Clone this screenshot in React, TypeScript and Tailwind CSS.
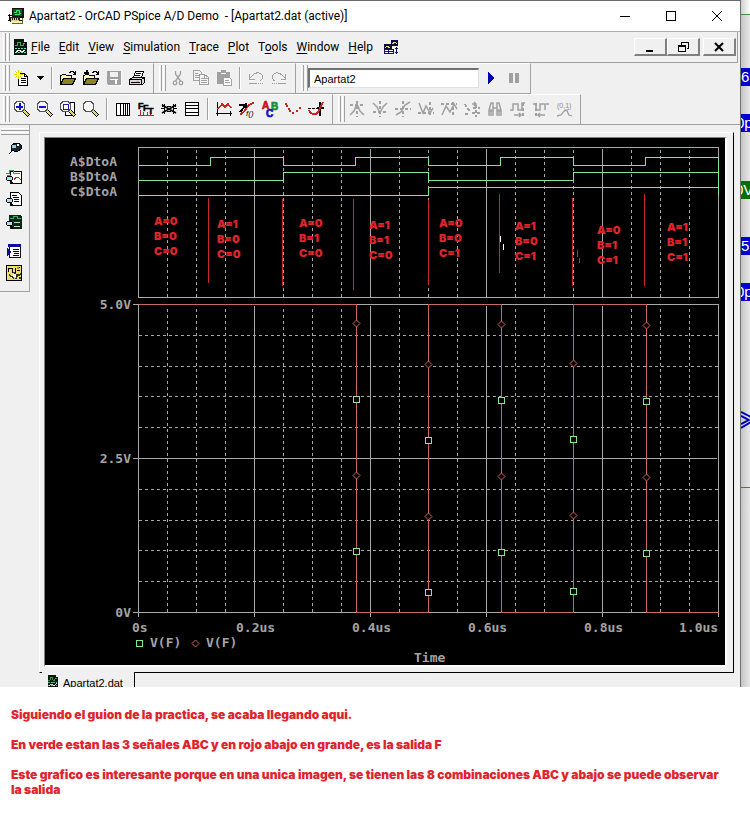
import React from "react";

type IconProps = { children: React.ReactNode; size?: string };

const UI = "font-['Roboto','Open_Sans',sans-serif]";
const ARIAL = "font-['Liberation_Sans',Arial,sans-serif]";
const HEAVY = "font-['Inter','Liberation_Sans',sans-serif] font-black";

function Icon({ children, size = "size-4" }: IconProps) {
  return (
    <svg viewBox="0 0 16 16" className={`${size} shrink-0 overflow-visible`} fill="none" stroke="#000" strokeWidth="1" shapeRendering="crispEdges" aria-hidden="true">
      {children}
    </svg>
  );
}

function Tool({ label, children }: { label: string; children: React.ReactNode }) {
  return (
    <button type="button" aria-label={label} title={label} className="flex h-[22px] w-[23px] shrink-0 items-center justify-center">
      {children}
    </button>
  );
}

function Grip() {
  return (
    <span className="flex h-full shrink-0 gap-px pl-[3px]" aria-hidden="true">
      <span className="w-[3px] border-r border-l border-l-white border-r-[#a0a0a0]" />
      <span className="w-[3px] border-r border-l border-l-white border-r-[#a0a0a0]" />
    </span>
  );
}

function Sep() {
  return (
    <span className="flex h-[22px] w-[9px] shrink-0 justify-center" aria-hidden="true">
      <span className="w-[2px] border-l border-[#a0a0a0] bg-white" />
    </span>
  );
}

function Band({ children }: { children: React.ReactNode }) {
  return (
    <div className="flex h-[31px] items-center border-t border-r border-b border-t-white border-r-[#a0a0a0] border-b-[#a0a0a0] pt-px pr-[5px] pb-[2px] pl-[2px] first:pl-0">
      <Grip />
      {children}
    </div>
  );
}

/* ---------- icons ---------- */

const DatIcon = ({ size }: { size?: string }) => (
  <Icon size={size}>
    <path d="M2 0h10l3 3v13h-13z" fill="#0a1410" stroke="none" />
    <path d="M12 0l3 3h-3z" fill="#fff" stroke="none" />
    <path d="M3 6.500h2v-3h3v3h3v-2h2" stroke="#2fae4a" />
    <path d="M3 9.500h11M3 13.500h11" stroke="#7fd8b0" strokeDasharray="2 1" />
    <path d="M4 13l3-2 3 2 3-2" stroke="#fff" />
  </Icon>
);

const AppIcon = () => (
  <Icon>
    <path d="M4 0h12v10h-12z" fill="#111" stroke="none" />
    <path d="M5 1h9v7h-9z" fill="#0c5a22" stroke="none" />
    <path d="M6 4.500h2v-2h3v3h2M7 6.500h5" stroke="#3ddc64" />
    <path d="M0 7.500h4M1.500 6v7M0 12.500h14" />
    <path d="M2 9h9v4h-9z" fill="#d8cf7a" stroke="#222" />
    <path d="M4 12v-4M6 12v-4M8 12v-4M10 12v-4" stroke="#222" />
    <path d="M3 13h10v3h-10z" fill="#f2eeb0" stroke="none" />
    <path d="M14.500 10v5h-11" stroke="#6b6420" />
  </Icon>
);

const NewIcon = () => (
  <Icon>
    <path d="M4.500 3.500h6l3 3v9h-9z" fill="#fff" />
    <path d="M10.500 3.500v3h3M7 8.500h5M7 10.500h5M7 12.500h5" />
    <path d="M4.500 0v9M0 4.500h9M1 1l7 7M8 1l-7 7" stroke="#e0d800" />
    <path d="M3 3h3v3h-3z" fill="#fff86a" stroke="none" />
  </Icon>
);

const OpenIcon = ({ plus }: { plus?: boolean }) => (
  <Icon>
    <path d="M.5 14.500v-9h1l1-1h3l1 1h5v3" fill="#fffbb0" />
    <path d="M.5 14.500l3-6h12l-3 6z" fill="#8a8420" />
    <path d="M9 2.500h1v-1h3v1h1v2M15.500 1v3h-3" />
    {plus && <path d="M3.500 0v5M1 2.500h5" strokeWidth="2" />}
  </Icon>
);

const SaveIcon = () => (
  <Icon>
    <path d="M1 1h14v14h-13l-1-1z" fill="#a0a0a0" stroke="none" />
    <path d="M4 2h8v5h-8z" fill="#f0f0f0" stroke="none" />
    <path d="M9 10h2v4h-2z" fill="#fff" stroke="none" />
    <path d="M4 9.500h8M15.500 2v13.500h-13" stroke="#fff" />
  </Icon>
);

const PrintIcon = () => (
  <Icon>
    <path d="M4.500 7.500l2-6h8l-2 6z" fill="#fff" />
    <path d="M7 3.500h5M6 5.500h5" />
    <path d="M.5 9.500l3-2h12v5l-2 2h-13z" fill="#d8d8d8" />
    <path d="M.5 9.500h12v5M12.500 9.500l3-2M2 12.500h9" />
    <path d="M7 11h3v1h-3z" fill="#d8c800" stroke="none" />
  </Icon>
);

const CutIcon = () => (
  <Icon>
    <g stroke="#a0a0a0" shapeRendering="auto">
      <path d="M5.500 1v3l5 7M10.500 1v3l-5 7" strokeWidth="1.300" />
      <circle cx="5" cy="13" r="1.800" strokeWidth="1.300" />
      <circle cx="11" cy="13" r="1.800" strokeWidth="1.300" />
    </g>
  </Icon>
);

const CopyIcon = () => (
  <Icon>
    <g stroke="#a0a0a0">
      <path d="M.5.5h6l2 2v8h-8z" fill="#f4f4f4" />
      <path d="M2 3.500h3M2 5.500h5M2 7.500h5" />
      <path d="M6.500 4.500h5l4 3v7h-9z" fill="#f4f4f4" />
      <path d="M8 8.500h4M8 10.500h6M8 12.500h6M11.500 5v3h4" />
    </g>
  </Icon>
);

const PasteIcon = () => (
  <Icon>
    <path d="M1 2h13v12h-13z" fill="#a0a0a0" stroke="none" />
    <path d="M5 0h5v4h-5z" fill="#a0a0a0" stroke="none" />
    <path d="M5 3.500h5" stroke="#fff" />
    <path d="M7.500 7.500h6l2 2v6h-8z" fill="#fff" stroke="#a0a0a0" />
    <path d="M9 10.500h4M9 12.500h5" stroke="#a0a0a0" />
  </Icon>
);

const UndoIcon = ({ flip }: { flip?: boolean }) => (
  <Icon>
    <g transform={flip ? "translate(16 0) scale(-1 1)" : undefined} stroke="#a0a0a0">
      <path d="M1.500 4v5h5M2 8l3-3c3-3 7-3 9 0 1 3 0 5-2 6" />
      <path d="M2 10.500h4" stroke="#fff" />
      <path d="M1 13.500h8" />
      <path d="M10 13.500h5" strokeDasharray="1 1" />
    </g>
  </Icon>
);

const Magnifier = ({ mode }: { mode: "in" | "out" | "area" | "fit" }) => (
  <Icon>
    {mode === "area" && <path d="M5.500 1.500h9v13h-9z" fill="#fff" />}
    <path d="M9 9l6 6" strokeWidth="4" />
    <path d="M9.500 9.500l5 5" stroke="#e0d868" strokeWidth="2" />
    <path d="M3 .5h5l2.500 2.500v5l-2.500 2.500h-5l-2.500-2.500v-5z" fill="#f6f6f6" stroke="#555" />
    {mode === "in" && <path d="M5.500 2v7M2 5.500h7" stroke="#1010c8" strokeWidth="2" />}
    {mode === "out" && <path d="M2 5.500h7" stroke="#1010c8" strokeWidth="2" />}
    {mode === "area" && <path d="M3 3h5v5h-5z" stroke="#2020a0" fill="#fff" />}
  </Icon>
);

const LogXIcon = () => (
  <Icon>
    <path d="M1.500 2.500h13v12h-13z" fill="#fff" />
    <path d="M5.500 2v13M8.500 2v13M10.500 2v13M12.500 2v13" />
  </Icon>
);

const FftIcon = () => (
  <Icon>
    <path d="M0 14.500h16M2.500 14v-5M5.500 14v-3M9.500 14v-3M12.500 14v-2" stroke="#d02020" />
    <g className={ARIAL} fill="#000" stroke="#000" strokeWidth="0.500" fontWeight="700" fontSize="9">
      <text x="0" y="8">F</text>
      <text x="5" y="10">F</text>
      <text x="10" y="13">T</text>
    </g>
  </Icon>
);

const PerfIcon = () => (
  <Icon>
    <path d="M1 4l14 8M1 12l14-8" strokeWidth="1.500" shapeRendering="auto" />
    <path d="M0 7.500h4M12 7.500h4M1.500 3v3M3.500 3v10M12.500 3v10M14.500 3v3M6 5.500h4M6 10.500h4" />
  </Icon>
);

const LogYIcon = () => (
  <Icon>
    <path d="M1.500 1.500h13v13h-13z" fill="#fff" />
    <path d="M1 4.500h14M1 7.500h14M1 11.500h14" />
  </Icon>
);

const AddTraceIcon = () => (
  <Icon>
    <path d="M1.500 1v14M0 12.500h16M14.500 10v5" />
    <path d="M2 8l4-5 3 3 3-3 3 4" stroke="#d02020" strokeWidth="1.500" />
  </Icon>
);

const EvalIcon = () => (
  <Icon>
    <path d="M1 13c6 0 5-10 14-11" stroke="#d02020" strokeWidth="2" />
    <path d="M0 3.500h6M1 11l6-7M6.500 2v5" strokeWidth="2" />
    <text x="7" y="15" fontSize="8" fill="#000" stroke="none" fontStyle="italic" className={ARIAL}>f()</text>
  </Icon>
);

const LabelIcon = () => (
  <Icon>
    <g className={ARIAL} strokeWidth="0.700" fontWeight="700" fontSize="10">
      <text x="0" y="8" fill="#c81020" stroke="#c81020">A</text>
      <text x="9" y="9" fill="#109030" stroke="#109030">B</text>
      <text x="4" y="16" fill="#1010c8" stroke="#1010c8">C</text>
    </g>
  </Icon>
);

const PointsIcon = () => (
  <Icon>
    <path d="M0 2h2v2h-2zM1 4h2v2h-2zM3 7h2v2h-2zM4 9h2v2h-2zM7 11h2v2h-2zM11 9h2v2h-2zM14 6h2v2h-2z" fill="#d02020" stroke="none" />
  </Icon>
);

const CursorIcon = () => (
  <Icon>
    <path d="M0 7.500h10" strokeDasharray="3 1" />
    <path d="M12 1v14M9 7h7" strokeWidth="2" />
    <path d="M1 9c2 5 8 6 10 0l4-8" stroke="#d02020" strokeWidth="2" />
  </Icon>
);

/* greyed cursor commands */
const cursorTools: { label: string; d: string; dash?: string }[] = [
  { label: "Cursor peak", d: "M1 14l4-4 3-7 3 7 4 4", dash: "M1 4h14M8 0v16" },
  { label: "Cursor trough", d: "M1 2l4 4 3 6 3-6 4-4", dash: "M1 11h14M8 0v16" },
  { label: "Cursor slope", d: "M1 14l5-3 4-7 5-3", dash: "M0 8h16M8 0v16" },
  { label: "Cursor min", d: "M1 2l4 10 3-7 4 7 3-5", dash: "M0 12h16M12 1v14" },
  { label: "Cursor max", d: "M1 14l4-9 4 6 4-8 3 5", dash: "M0 3h16M12 1v14" },
  { label: "Cursor point", d: "M8 3h3M10 1l2 2-2 2", dash: "M1 3l5 8M9 7h7M8 12h8M12 4v12M1 13h4" },
  { label: "Cursor search", d: "M2 14v-5l2-7h2v12zM10 14v-12h2l2 7v5zM4 8v5M12 8v5M6 7h4M2 10h4M10 10h4" },
  { label: "Cursor next transition", d: "M0 9h3v-6h5v6h4v-7h3M4 14h7M9 12l2 2-2 2", dash: "M13 2v14" },
  { label: "Cursor previous transition", d: "M0 3h3v6h4v-6h5v6M13 3h3M5 14h7M7 12l-2 2 2 2", dash: "M3 2v14" },
];

const MarkIcon = () => (
  <Icon>
    <text x="1" y="7" fontSize="7" fill="#8c8c8c" stroke="none" className={ARIAL}>(0,1)</text>
    <path d="M1 15l4-1 4-5 2 1 2 4 3 1M9 10l4-2" stroke="#a0a0a0" strokeWidth="1.300" shapeRendering="auto" />
  </Icon>
);

const lens = (
  <>
    <path d="M4 11l3 4" strokeWidth="2" />
    <path d="M.5 8.500l1-1h4l1 1v2l-1 1h-4l-1-1z" fill="#b4dde6" />
  </>
);

const sideTools: { label: string; gap: string; art: React.ReactNode }[] = [
  {
    label: "Pin", gap: "h-[29px]",
    art: <><path d="M3 14l4-4" /><path d="M5 6l4-3h4l2 2v4l-3 2h-4l-3-1z" fill="#1a2630" /><path d="M6 5h4v3h-4z" fill="#9ecfe0" stroke="none" /><path d="M11 4h2v2h-2z" fill="#fff" stroke="none" /></>,
  },
  {
    label: "View waveform", gap: "h-[22px]",
    art: <><path d="M4.500 2.500h11v12h-11z" fill="#fff" /><path d="M0 4.500h3v-3h4v3h7M1 6.500h4" stroke="#30a040" /><path d="M8 11l2-3h2l3 3" stroke="#d02020" />{lens}</>,
  },
  {
    label: "View output file", gap: "h-[23px]",
    art: <><path d="M4.500 1.500h8l3 3v10h-11z" fill="#fff" /><path d="M6 4.500h5M7 6.500h6M8 8.500h5M8 10.500h5" />{lens}</>,
  },
  {
    label: "View circuit file", gap: "h-[29px]",
    art: <><path d="M3 1h11l2 2v12h-12z" fill="#12241a" stroke="none" /><path d="M4 4.500h3v-2h4v2h4" stroke="#40b060" /><path d="M8 8.500h6M8 12.500h6" stroke="#b8e8c8" />{lens}</>,
  },
  {
    label: "View messages", gap: "h-[22px]",
    art: <><path d="M3.500 2.500h11v12h-11z" fill="#fff" stroke="#111" /><path d="M2 1h13v3h-13z" fill="#0a0aa0" stroke="none" /><path d="M7 6.500h6M7 8.500h6M8 10.500h5M7 12.500h6" /><path d="M1 5l5 4-5 4z" fill="#0a0aa0" stroke="none" /></>,
  },
  {
    label: "Simulation queue", gap: "h-[16px]",
    art: <><path d="M.5.5h15v15h-15z" fill="#e8e070" /><path d="M2 7v-4h4v4h3v-4M11 2h3M11 5h3" /><path d="M3 10l5 3M8 7l3 4 4-2M10 14l1-5M13 13h2" stroke="#333" strokeWidth="1.500" /><path d="M7 9h3v3h-3z" fill="#fff" stroke="none" /><path d="M11 2h2v2h-2z" fill="#d08020" stroke="none" /></>,
  },
];

/* ---------- chart ---------- */

const X0 = 93;
const usToX = (t: number) => X0 + t * 580 + 0.5;
const majors = [0.2, 0.4, 0.6, 0.8];
const minors = [1, 2, 3, 5, 6, 7, 9, 10, 11, 13, 14, 15, 17, 18, 19].map((n) => n * 0.05);

const signals = [
  { name: "A$DtoA", low: 27, edges: [0.125, 0.25, 0.375, 0.5, 0.625, 0.75, 0.875] },
  { name: "B$DtoA", low: 42, edges: [0.25, 0.5, 0.75] },
  { name: "C$DtoA", low: 57, edges: [0.5] },
];

function wave(low: number, edges: number[]) {
  let level = 0;
  let d = `M${usToX(0)} ${low + 0.5}`;
  for (const e of edges) {
    level = 1 - level;
    d += `H${Math.ceil(usToX(e)) - 0.5}V${low + 0.5 - level * 8}`;
  }
  return d + `H${usToX(1)}`;
}

const combos: { x: number; y: number; bits: string }[] = [
  { x: 109, y: 87, bits: "000" },
  { x: 172, y: 90, bits: "100" },
  { x: 254, y: 89, bits: "010" },
  { x: 324, y: 91, bits: "110" },
  { x: 394, y: 89, bits: "001" },
  { x: 470, y: 92, bits: "101" },
  { x: 552, y: 96, bits: "011" },
  { x: 622, y: 93, bits: "111" },
];

const handLines = [
  [163, 60, 145], [237, 61, 148], [308, 61, 152], [383, 62, 147], [454, 56, 135], [527, 60, 148], [599, 56, 148],
];

const markers = [
  { x: 311, sq: 261, di: 185 },
  { x: 383, sq: 302, di: 226 },
  { x: 456, sq: 262, di: 186 },
  { x: 528, sq: 301, di: 225 },
  { x: 601, sq: 263, di: 187 },
];

const xLabels = [
  { x: 87, t: "0s" }, { x: 191, t: "0.2us" }, { x: 307, t: "0.4us" }, { x: 423, t: "0.6us" }, { x: 539, t: "0.8us" }, { x: 634, t: "1.0us" },
];

function Square({ x, y }: { x: number; y: number }) {
  return <path d={`M${x - 2.5} ${y - 2.5}h6v6h-6z`} stroke="#86e48f" fill="#000" />;
}
function Diamond({ x, y }: { x: number; y: number }) {
  return <path d={`M${x + 0.5} ${y - 3}l3.500 3.500l-3.500 3.500l-3.500 -3.500z`} stroke="#d0605c" fill="#000" shapeRendering="auto" />;
}

function Plot() {
  return (
    <svg viewBox="0 0 680 527" className="block h-auto w-full bg-black" role="img" aria-label="Waveform plot" fill="none" strokeWidth="1" shapeRendering="crispEdges">
      <g stroke="#a8a8a8">
        <path d="M93.500 9.500H673.500V159.500H93.500Z" />
        <path d="M87.500 166.500H673.500V479M93.500 166V479M87.500 474.500H673.500M87.500 320.500H672" />
        {majors.map((t) => (
          <path key={t} d={`M${usToX(t)} 11V159M${usToX(t)} 168V479`} />
        ))}
        <g strokeDasharray="3 3">
          {minors.map((t) => (
            <path key={t} d={`M${usToX(t)} 12V159M${usToX(t)} 171V474`} />
          ))}
          {[197, 228, 258, 289, 351, 382, 412, 443].map((y) => (
            <path key={y} d={`M94 ${y + 0.5}H673`} />
          ))}
        </g>
      </g>

      <g stroke="#86e48f">
        {signals.map((s) => (
          <path key={s.name} d={wave(s.low, s.edges)} />
        ))}
        <path d="M673.500 19V57" />
      </g>

      <path stroke="#cc6660" d="M93.500 166.500H311.500V474.500H383.500V166.500H456.500V474.500H528.500V166.500H601.500V474.500H673.500" />
      {markers.map((m) => (
        <g key={m.x}>
          <Diamond x={m.x} y={m.di} />
          <Diamond x={m.x} y={m.di + 152} />
          <Square x={m.x} y={m.sq} />
          <Square x={m.x} y={m.sq + 152} />
        </g>
      ))}

      <g stroke="#d0242c">
        {handLines.map(([x, a, b]) => (
          <path key={x} d={`M${x + 0.5} ${a}V${b}`} />
        ))}
        <path d="M532.500 112v7M534.500 120v5" />
      </g>
      <path stroke="#fff" d="M455.500 98v6M458.500 106v6" />

      <g className="font-['DejaVu_Sans_Mono',monospace] text-[13px] font-bold" fill="#a4a4a4" stroke="none">
        {signals.map((s) => (
          <text key={s.name} x="25" y={s.low + 1}>{s.name}</text>
        ))}
        <text x="86" y="171" textAnchor="end">5.0V</text>
        <text x="86" y="325" textAnchor="end">2.5V</text>
        <text x="86" y="479" textAnchor="end">0V</text>
        {xLabels.map((l) => (
          <text key={l.t} x={l.x} y="494">{l.t}</text>
        ))}
        <text x="105" y="509">V(F)</text>
        <text x="161" y="509">V(F)</text>
        <text x="369" y="524">Time</text>
      </g>
      <Square x={94} y={505} />
      <Diamond x={150} y={505} />

      <g className={`${HEAVY} text-[11px]`} fill="#e0242c" stroke="none">
        {combos.map((c) => (
          <text key={c.bits}>
            <tspan x={c.x} y={c.y}>A={c.bits[0]}</tspan>
            <tspan x={c.x} y={c.y + 15}>B={c.bits[1]}</tspan>
            <tspan x={c.x} y={c.y + 30}>C={c.bits[2]}</tspan>
          </text>
        ))}
      </g>
    </svg>
  );
}

/* ---------- window chrome ---------- */

const menus = ["File", "Edit", "View", "Simulation", "Trace", "Plot", "Tools", "Window", "Help"];
const accel: Record<string, number> = { Tools: 1 };

function MenuLabel({ text }: { text: string }) {
  const i = accel[text] ?? 0;
  return (
    <>
      {text.slice(0, i)}
      <span className="underline underline-offset-2">{text[i]}</span>
      {text.slice(i + 1)}
    </>
  );
}

function MdiButton({ label, children }: { label: string; children: React.ReactNode }) {
  return (
    <button type="button" aria-label={label} className="flex h-[18px] w-[33px] items-center justify-center border-t border-r-2 border-b-2 border-l border-t-white border-r-[#808080] border-b-[#808080] border-l-white">
      {children}
    </button>
  );
}

function BackgroundCanvas() {
  const chip = "absolute left-0 h-[18px] w-full overflow-hidden whitespace-nowrap text-[15px] leading-[18px] text-white";
  return (
    <div className={`relative w-[9px] shrink-0 overflow-hidden bg-gradient-to-r from-[#c4c4c4] to-[#e8e8e8] ${ARIAL}`} aria-hidden="true">
      <div className="absolute top-0 left-0 h-[15px] w-full border-b border-[#3f8f3f] bg-gradient-to-r from-[#d0d0d0] to-white" />
      <div className={`${chip} top-[68px] bg-[#0000d0]`}>6</div>
      <div className={`${chip} top-[114px] bg-[#0000d0]`}><span className="-ml-[5px]">0p</span></div>
      <div className={`${chip} top-[181px] bg-[#007000]`}><span className="-ml-[6px]">0V</span></div>
      <div className={`${chip} top-[237px] bg-[#0000d0]`}>5.</div>
      <div className={`${chip} top-[283px] bg-[#0000d0]`}><span className="-ml-[5px]">0p</span></div>
      <svg className="absolute top-[410px] left-0 h-[20px] w-[9px]" viewBox="0 0 9 20" fill="none" stroke="#0000c0" strokeWidth="2">
        <path d="M0 2l10 5M0 6l8 4-8 4M10 12l-10 6" />
      </svg>
      <div className="absolute top-[487px] left-0 h-px w-full bg-[#2f8a2f]" />
    </div>
  );
}

export default function App() {
  return (
    <div className="bg-white">
      <div className="flex">
        <main className="min-w-0 flex-1 border-t border-r border-t-[#6c6c6c] border-r-[#707070] bg-[#f0f0f0]">
          <header className="flex h-[31px] items-center border-b border-[#b0b0b0] bg-white pl-2">
            <AppIcon />
            <h1 className={`ml-[5px] flex-1 text-[12px] leading-4 whitespace-pre text-black ${UI}`}>Apartat2 - OrCAD PSpice A/D Demo  - [Apartat2.dat (active)]</h1>
            <div className="flex">
              <button type="button" aria-label="Minimize" className="flex h-[30px] w-[46px] items-center justify-center">
                <svg viewBox="0 0 10 10" className="size-[10px]" stroke="#000" shapeRendering="crispEdges"><path d="M0 5.500h10" /></svg>
              </button>
              <button type="button" aria-label="Maximize" className="flex h-[30px] w-[46px] items-center justify-center">
                <svg viewBox="0 0 10 10" className="size-[10px]" stroke="#000" fill="none" shapeRendering="crispEdges"><path d="M.5.5h9v9h-9z" /></svg>
              </button>
              <button type="button" aria-label="Close" className="flex h-[30px] w-[46px] items-center justify-center">
                <svg viewBox="0 0 10 10" className="size-[10px]" stroke="#000"><path d="M0 0l10 10M10 0l-10 10" /></svg>
              </button>
            </div>
          </header>

          <nav className="mr-[2px] flex h-[31px] items-center border-r border-b border-[#a0a0a0] py-px pr-[1px]">
            <Grip />
            <span className="ml-[2px]"><DatIcon /></span>
            <div className={`flex text-[12px] leading-4 text-black ${UI}`}>
              {menus.map((m) => (
                <button type="button" key={m} className="pr-[4px] pl-[5px] first:pl-[3px]">
                  <MenuLabel text={m} />
                </button>
              ))}
            </div>
            <button type="button" aria-label="Toggle display" className="ml-[6px]">
              <Icon>
                <path d="M1 5h8v6h-8zM8 1h7v6h-7z" fill="#101030" stroke="none" />
                <path d="M2 9l2-2 3 2M9 5l3-2 2 2" stroke="#e8e070" />
                <path d="M1.500 10.500h9v4h-9zM5.500 11v4M1 12.500h9" stroke="#101070" fill="#fff" />
                <path d="M13.500 8v7M12 9.500h3M12 13.500h3" stroke="#101070" />
              </Icon>
            </button>
            <div className="ml-auto flex">
              <MdiButton label="Minimize document">
                <svg viewBox="0 0 12 12" className="size-3" shapeRendering="crispEdges"><path d="M2 9h7v2h-7z" /></svg>
              </MdiButton>
              <MdiButton label="Restore document">
                <svg viewBox="0 0 12 12" className="size-3" fill="none" stroke="#000" shapeRendering="crispEdges"><path d="M4 1h7.500v6.500h-2M4.500 1v3M4 1.500h7M1.500 4.500h7v6h-7zM1 5.500h7" /></svg>
              </MdiButton>
              <span className="w-[3px]" />
              <MdiButton label="Close document">
                <svg viewBox="0 0 12 12" className="size-3" fill="none" stroke="#000" strokeWidth="2"><path d="M2 2l8 8M10 2l-8 8" /></svg>
              </MdiButton>
            </div>
          </nav>

          <div className="flex">
            <Band>
              <Tool label="New"><NewIcon /></Tool>
              <button type="button" aria-label="New options" className="flex h-[22px] w-[14px] items-center justify-center">
                <svg viewBox="0 0 7 4" className="h-1 w-[7px]" shapeRendering="crispEdges"><path d="M0 0h7l-3.500 4z" /></svg>
              </button>
              <Sep />
              <Tool label="Open"><OpenIcon /></Tool>
              <Tool label="Append"><OpenIcon plus /></Tool>
              <Tool label="Save"><SaveIcon /></Tool>
              <Tool label="Print"><PrintIcon /></Tool>
            </Band>
            <Band>
              <Tool label="Cut"><CutIcon /></Tool>
              <Tool label="Copy"><CopyIcon /></Tool>
              <Tool label="Paste"><PasteIcon /></Tool>
              <Sep />
              <Tool label="Undo"><UndoIcon /></Tool>
              <Tool label="Redo"><UndoIcon flip /></Tool>
            </Band>
            <Band>
              <input
                aria-label="Simulation profile"
                defaultValue="Apartat2"
                className={`h-5 w-[171px] border-t-2 border-r border-b border-l-2 border-t-[#707070] border-r-[#e0e0e0] border-b-[#e0e0e0] border-l-[#707070] bg-white px-1 text-[11px] leading-4 text-black ${ARIAL}`}
              />
              <Tool label="Run"><Icon><path d="M5 2l6 6-6 6z" fill="#0000b0" stroke="#0000b0" /></Icon></Tool>
              <Tool label="Pause"><Icon><path d="M3 3h4v10h-4zM9 3h4v10h-4z" fill="#a0a0a0" stroke="none" /></Icon></Tool>
            </Band>
          </div>

          <div className="flex border-b border-[#a0a0a0]">
            <div className="-mb-px flex">
              <Band>
                <Tool label="Zoom in"><Magnifier mode="in" /></Tool>
                <Tool label="Zoom out"><Magnifier mode="out" /></Tool>
                <Tool label="Zoom area"><Magnifier mode="area" /></Tool>
                <Tool label="Zoom fit"><Magnifier mode="fit" /></Tool>
                <Sep />
                <Tool label="Log X axis"><LogXIcon /></Tool>
                <Tool label="Fourier"><FftIcon /></Tool>
                <Tool label="Performance analysis"><PerfIcon /></Tool>
                <Tool label="Log Y axis"><LogYIcon /></Tool>
                <Sep />
                <Tool label="Add trace"><AddTraceIcon /></Tool>
                <Tool label="Evaluate goal function"><EvalIcon /></Tool>
                <Tool label="Text label"><LabelIcon /></Tool>
                <Tool label="Mark data points"><PointsIcon /></Tool>
                <Tool label="Toggle cursor"><CursorIcon /></Tool>
              </Band>
              <Band>
                {cursorTools.map((t) => (
                  <Tool key={t.label} label={t.label}>
                    <Icon>
                      <path d={t.d} stroke="#a0a0a0" strokeWidth="1.500" shapeRendering="auto" />
                      {t.dash && <path d={t.dash} stroke="#a0a0a0" strokeWidth="2" strokeDasharray="3 2" />}
                    </Icon>
                  </Tool>
                ))}
                <Tool label="Mark label"><MarkIcon /></Tool>
              </Band>
            </div>
          </div>

          <div className="flex items-start">
            <aside className="w-[30px] shrink-0 border-r border-b border-[#a0a0a0] pb-[10px]">
              <div className="mb-[5px] ml-px flex flex-col gap-px pt-[3px]" aria-hidden="true">
                <span className="h-[3px] border-t border-b border-t-white border-b-[#a0a0a0]" />
                <span className="h-[3px] border-t border-b border-t-white border-b-[#a0a0a0]" />
              </div>
              {sideTools.map((t) => (
                <button type="button" key={t.label} aria-label={t.label} title={t.label} className={`flex w-[27px] items-start justify-center ${t.gap}`}>
                  <Icon>{t.art}</Icon>
                </button>
              ))}
            </aside>

            <section className="mt-[7px] mr-[6px] ml-[9px] min-w-0 flex-1">
              <div className="border-t border-r border-b border-l border-t-white border-r-black border-b-black border-l-white pt-1 pr-[6px] pb-[5px] pl-1">
                <div className="border-t border-r-2 border-b-2 border-l border-t-[#808080] border-r-white border-b-white border-l-[#808080]">
                  <Plot />
                </div>
              </div>
              <div className={`relative -mt-px ml-[3px] flex h-[15px] w-[93px] items-start gap-1 overflow-hidden border-r border-black bg-[#f0f0f0] pt-[3px] pl-1 text-[11px] leading-4 text-black ${ARIAL}`}>
                <DatIcon size="size-[13px]" />
                <span className="whitespace-nowrap">Apartat2.dat</span>
              </div>
            </section>
          </div>
        </main>
        <BackgroundCanvas />
      </div>

      <article className={`flex flex-col gap-[15px] pt-5 pr-6 pb-5 pl-[11px] text-[12px] leading-[15px] text-[#e0242c] ${HEAVY}`}>
        <p>Siguiendo el guion de la practica, se acaba llegando aqui.</p>
        <p>En verde estan las 3 señales ABC y en rojo abajo en grande, es la salida F</p>
        <p>Este grafico es interesante porque en una unica imagen, se tienen las 8 combinaciones ABC y abajo se puede observar la salida</p>
      </article>
    </div>
  );
}
